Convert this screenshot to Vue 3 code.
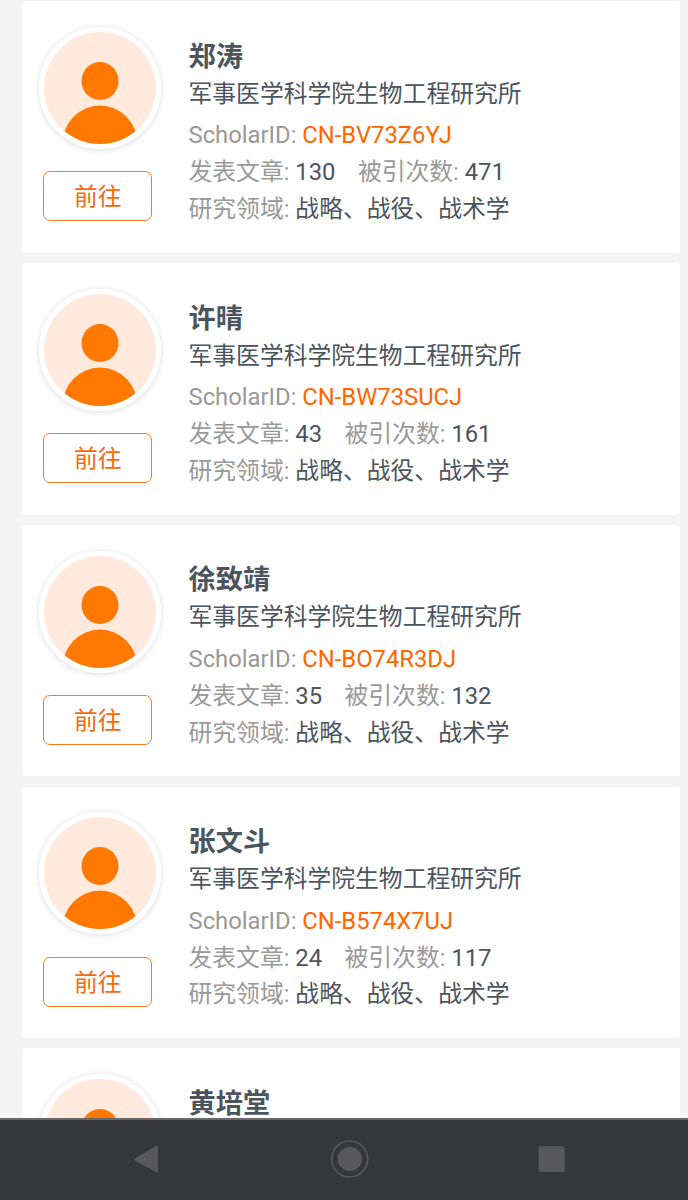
<script setup>
const org = '军事医学科学院生物工程研究所'
const field = '战略、战役、战术学'

const scholars = [
  { name: '郑涛', id: 'CN-BV73Z6YJ', articles: 130, cited: 471 },
  { name: '许晴', id: 'CN-BW73SUCJ', articles: 43, cited: 161 },
  { name: '徐致靖', id: 'CN-BO74R3DJ', articles: 35, cited: 132 },
  { name: '张文斗', id: 'CN-B574X7UJ', articles: 24, cited: 117 },
  { name: '黄培堂', id: '', articles: '', cited: '' },
]
</script>

<template>
  <div class="screen">
    <main class="list">
      <section v-for="s in scholars" :key="s.name" class="card">
        <div class="side">
          <div class="avatar">
            <svg width="112" height="112" viewBox="0 0 112 112">
              <defs>
                <clipPath id="face"><circle cx="56" cy="56" r="56" /></clipPath>
              </defs>
              <g clip-path="url(#face)">
                <rect width="112" height="112" fill="#ffeadd" />
                <ellipse cx="56" cy="49" rx="18.5" ry="19" fill="#ff7800" />
                <ellipse cx="56" cy="112" rx="37.5" ry="38.5" fill="#ff7800" />
              </g>
            </svg>
          </div>
          <button v-if="s.id" class="go">前往</button>
        </div>
        <div class="info">
          <h3 class="name">{{ s.name }}</h3>
          <!-- the last card is cut off by the navigation bar -->
          <template v-if="s.id">
            <p class="org">{{ org }}</p>
            <p class="row">ScholarID: <span class="id">{{ s.id }}</span></p>
            <p class="row">
              <span>发表文章: <b>{{ s.articles }}</b></span>
              <span class="cited">被引次数: <b>{{ s.cited }}</b></span>
            </p>
            <p class="row">研究领域: <b>{{ field }}</b></p>
          </template>
        </div>
      </section>
    </main>

    <nav class="navbar">
      <svg width="688" height="80" viewBox="0 0 688 80">
        <path d="M135.5 38.1 L156.5 25.7 Q158 25 158 26.8 V51.2 Q158 53 156.5 52.3 L135.5 40.9 Q133.5 39.5 135.5 38.1 Z" fill="#58585a" />
        <circle cx="349.7" cy="39" r="18" fill="none" stroke="#58585a" stroke-width="1.7" />
        <circle cx="349.9" cy="39" r="12.1" fill="#58585a" />
        <rect x="538.7" y="26.3" width="26" height="25.8" rx="2" fill="#58585a" />
      </svg>
    </nav>
  </div>
</template>

<style>
body {
  margin: 0;
  background: #f4f4f4;
}
</style>

<style scoped>
.screen {
  width: 688px;
  height: 1200px;
  display: flex;
  flex-direction: column;
  overflow: hidden;
  background: #f4f4f4;
  font-family: Roboto, 'Noto Sans CJK SC', sans-serif;
}

.list {
  flex: 1;
  min-height: 0;
  overflow: hidden;
  display: flex;
  flex-direction: column;
  gap: 10.2px;
  padding: 1.2px 8px 0 21.5px;
}

.card {
  flex: none;
  box-sizing: border-box;
  height: 251.6px;
  display: flex;
  background: #fff;
  border-radius: 4px;
}

.side {
  width: 157px;
  box-sizing: border-box;
  padding: 25.9px 0 0 17.2px;
  margin-right: 10px;
}

.avatar {
  width: 112px;
  height: 112px;
  border: 5px solid #fff;
  border-radius: 50%;
  box-shadow: 0 1px 6px rgba(40, 50, 70, 0.17);
}
.avatar svg {
  display: block;
}

.go {
  display: block;
  box-sizing: border-box;
  width: 109.4px;
  height: 50px;
  margin: 22.3px 0 0 4.4px;
  padding: 2px 0 0;
  border: 1px solid #f5791f;
  border-radius: 7px;
  background: #fff;
  color: #f56a0c;
  font-family: inherit;
  font-size: 23.8px;
  line-height: 46px;
}

.info {
  padding-top: 36.6px;
  color: #4c545e;
  white-space: nowrap;
}

.name {
  margin: 0;
  font-size: 27.2px;
  font-weight: 700;
  line-height: 38px;
}

.org {
  margin: 0 0 4px;
  font-size: 23.8px;
  line-height: 37.5px;
}

.row {
  margin: 0;
  font-size: 23.8px;
  line-height: 36.9px;
  color: #999;
}
.row b {
  font-weight: 400;
  color: #4c545e;
}
.id {
  color: #ff6600;
}
.cited {
  margin-left: 22.4px;
}

.navbar {
  flex: none;
  box-sizing: border-box;
  height: 82px;
  border-top: 2px solid #68696b;
  background: #36373a;
}
.navbar svg {
  display: block;
}
</style>
